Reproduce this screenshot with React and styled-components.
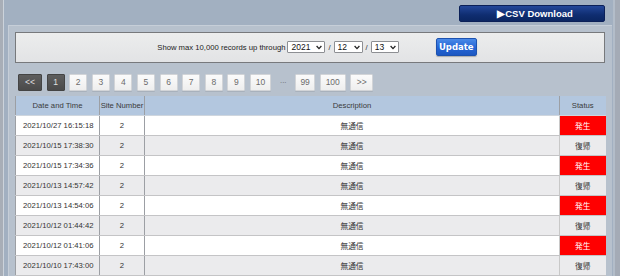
import React from "react";
import styled, { createGlobalStyle, css } from "styled-components";

const GlobalStyle = createGlobalStyle`
  html, body { margin: 0; padding: 0; }
  body { font-family: "Liberation Sans", Arial, sans-serif; background: #a2b0c1; }
`;

const Page = styled.div`
  box-sizing: border-box;
  width: 620px;
  height: 276px;
  overflow: hidden;
  background: #a2b0c1;
  border-left: 3px solid #a8aeb7;
  border-right: 5px solid #a4abb6;
  box-shadow: inset 1px 0 0 #ccd3db, inset -2px 0 0 #b3bdc9;
  display: flex;
  flex-direction: column;
`;

const TopBar = styled.div`
  height: 25px;
  display: flex;
  justify-content: flex-end;
  align-items: flex-start;
  padding-right: 10px;
  box-sizing: border-box;
`;

const CsvButton = styled.button`
  margin-top: 5px;
  width: 146px;
  height: 17px;
  border: 1px solid #0b2058;
  border-radius: 2px;
  background: linear-gradient(#23479a, #0f2d70 60%, #0b2662);
  color: #fff;
  font-family: "Liberation Sans", Arial, sans-serif;
  font-weight: bold;
  font-size: 9.5px;
  padding: 0;
  display: flex;
  align-items: center;
  justify-content: center;
  padding-left: 6px;
`;

const Panel = styled.div`
  flex: 1;
  margin: 0 3px 0 5px;
  background: #b7c1cd;
  border-top: 1px solid #c6ced8;
  border-left: 1px solid #c6ced8;
  padding: 6px 7px 0 6px;
  box-sizing: border-box;
  display: flex;
  flex-direction: column;
`;

const Controls = styled.div`
  height: 31px;
  box-sizing: border-box;
  border: 1px solid #77797c;
  background: linear-gradient(#eceded, #e2e3e5);
  display: flex;
  align-items: center;
  justify-content: center;
  padding-left: 14px;
  font-size: 7.7px;
  color: #222;
`;

const Label = styled.span`
  margin-right: 2px;
`;

const SelectWrap = styled.div`
  position: relative;
  display: inline-flex;
  width: ${(p) => p.$w}px;
  height: 12px;
`;

const Select = styled.select`
  appearance: none;
  -webkit-appearance: none;
  width: 100%;
  height: 100%;
  box-sizing: border-box;
  border: 1px solid #8d8f93;
  border-radius: 1px;
  background: #fff;
  font-family: "Liberation Sans", Arial, sans-serif;
  font-size: 8.5px;
  color: #111;
  padding: 0 0 0 3px;
  margin: 0;
  outline: none;
`;

const Chevron = styled.svg`
  position: absolute;
  right: 3px;
  top: 3.5px;
  width: 6px;
  height: 5px;
  pointer-events: none;
`;

const Slash = styled.span`
  margin: 0 3px;
  color: #333;
`;

const UpdateButton = styled.button`
  margin-left: 37px;
  width: 41px;
  height: 18px;
  border: 1px solid #1c52b0;
  border-radius: 2px;
  background: linear-gradient(#4a8ae8, #2464d4 55%, #1d58c2);
  color: #fff;
  font-family: "DejaVu Sans", Verdana, sans-serif;
  font-weight: bold;
  font-size: 8.5px;
  padding: 0;
  box-shadow: 0 1px 1px rgba(0, 0, 0, 0.25);
`;

const Pager = styled.div`
  margin-top: 11px;
  padding-left: 3px;
  display: flex;
  align-items: center;
  gap: 4.6px;
  height: 17px;
`;

const PageBtn = styled.div`
  height: 17px;
  min-width: ${(p) => p.$w || 18}px;
  box-sizing: border-box;
  display: flex;
  align-items: center;
  justify-content: center;
  font-size: 8.5px;
  border-radius: 1px;
  ${(p) =>
    p.$dark
      ? css`
          background: linear-gradient(#5e5e5e, #4a4a4a);
          border: 1px solid #444;
          color: #e0e0e0;
        `
      : css`
          background: linear-gradient(#fbfbfb, #eeeeee);
          border: 1px solid #d2d4d7;
          color: #6b6b6b;
          box-shadow: 0 1px 0 rgba(0, 0, 0, 0.08);
        `}
`;

const Dots = styled.span`
  color: #6d6d6d;
  font-size: 8px;
  width: 15px;
  text-align: center;
  letter-spacing: -0.5px;
`;

const Table = styled.table`
  margin-top: 5px;
  width: 590px;
  border-collapse: collapse;
  table-layout: fixed;
  font-size: 7.7px;
  color: #333;
`;

const Th = styled.th`
  height: 20px;
  padding: 0;
  background: #b3c7df;
  font-weight: normal;
  color: #3a3a3a;
  border-left: 1px solid #9c9fa4;
  border-bottom: 1px solid #cfd6de;
  box-sizing: border-box;
  text-align: center;
`;

const Tr = styled.tr`
  background: ${(p) => (p.$alt ? "#ebebed" : "#ffffff")};
`;

const Td = styled.td`
  height: 19px;
  padding: 0;
  border-left: 1px solid #9c9fa4;
  border-bottom: 1px solid #c4c4c6;
  text-align: ${(p) => p.$align || "center"};
  padding-left: ${(p) => (p.$align === "left" ? "7px" : "0")};
  font-family: "Liberation Sans", Arial, "Noto Sans CJK JP", sans-serif;
  white-space: nowrap;
  overflow: hidden;
`;

const StatusTd = styled(Td)`
  border-left: 1px solid #c8c8c8;
  background: ${(p) => (p.$alarm ? "#ff0000" : "transparent")};
  color: ${(p) => (p.$alarm ? "#ffffff" : "#333")};
`;

const rows = [
  ["2021/10/27 16:15:18", true],
  ["2021/10/15 17:38:30", false],
  ["2021/10/15 17:34:36", true],
  ["2021/10/13 14:57:42", false],
  ["2021/10/13 14:54:06", true],
  ["2021/10/12 01:44:42", false],
  ["2021/10/12 01:41:06", true],
  ["2021/10/10 17:43:00", false],
];

const pages = [
  { t: "<<", dark: true, w: 24 },
  { t: "1", dark: true },
  { t: "2" },
  { t: "3" },
  { t: "4" },
  { t: "5" },
  { t: "6" },
  { t: "7" },
  { t: "8" },
  { t: "9" },
  { t: "10", w: 21 },
  { dots: true },
  { t: "99", w: 20 },
  { t: "100", w: 26 },
  { t: ">>", w: 23 },
];

function Dropdown({ value, w }) {
  return (
    <SelectWrap $w={w}>
      <Select defaultValue={value}>
        <option value={value}>{value}</option>
      </Select>
      <Chevron viewBox="0 0 6 5">
        <path d="M0.6 1 L3 3.6 L5.4 1" fill="none" stroke="#222" strokeWidth="1.3" />
      </Chevron>
    </SelectWrap>
  );
}

export default function App() {
  return (
    <>
      <GlobalStyle />
      <Page>
        <TopBar>
          <CsvButton>▶CSV Download</CsvButton>
        </TopBar>
        <Panel>
          <Controls>
            <Label>Show max 10,000 records up through</Label>
            <Dropdown value="2021" w={38} />
            <Slash>/</Slash>
            <Dropdown value="12" w={29} />
            <Slash>/</Slash>
            <Dropdown value="13" w={28} />
            <UpdateButton>Update</UpdateButton>
          </Controls>
          <Pager>
            {pages.map((p, i) =>
              p.dots ? (
                <Dots key={i}>···</Dots>
              ) : (
                <PageBtn key={i} $dark={p.dark} $w={p.w}>
                  {p.t}
                </PageBtn>
              )
            )}
          </Pager>
          <Table>
            <colgroup>
              <col style={{ width: 84 }} />
              <col style={{ width: 45 }} />
              <col style={{ width: 415 }} />
              <col style={{ width: 46 }} />
            </colgroup>
            <thead>
              <tr>
                <Th>Date and Time</Th>
                <Th>Site Number</Th>
                <Th>Description</Th>
                <Th>Status</Th>
              </tr>
            </thead>
            <tbody>
              {rows.map(([d, alarm], i) => (
                <Tr key={i} $alt={i % 2 === 1}>
                  <Td $align="left">{d}</Td>
                  <Td>2</Td>
                  <Td>無通信</Td>
                  <StatusTd $alarm={alarm}>{alarm ? "発生" : "復帰"}</StatusTd>
                </Tr>
              ))}
            </tbody>
          </Table>
        </Panel>
      </Page>
    </>
  );
}
